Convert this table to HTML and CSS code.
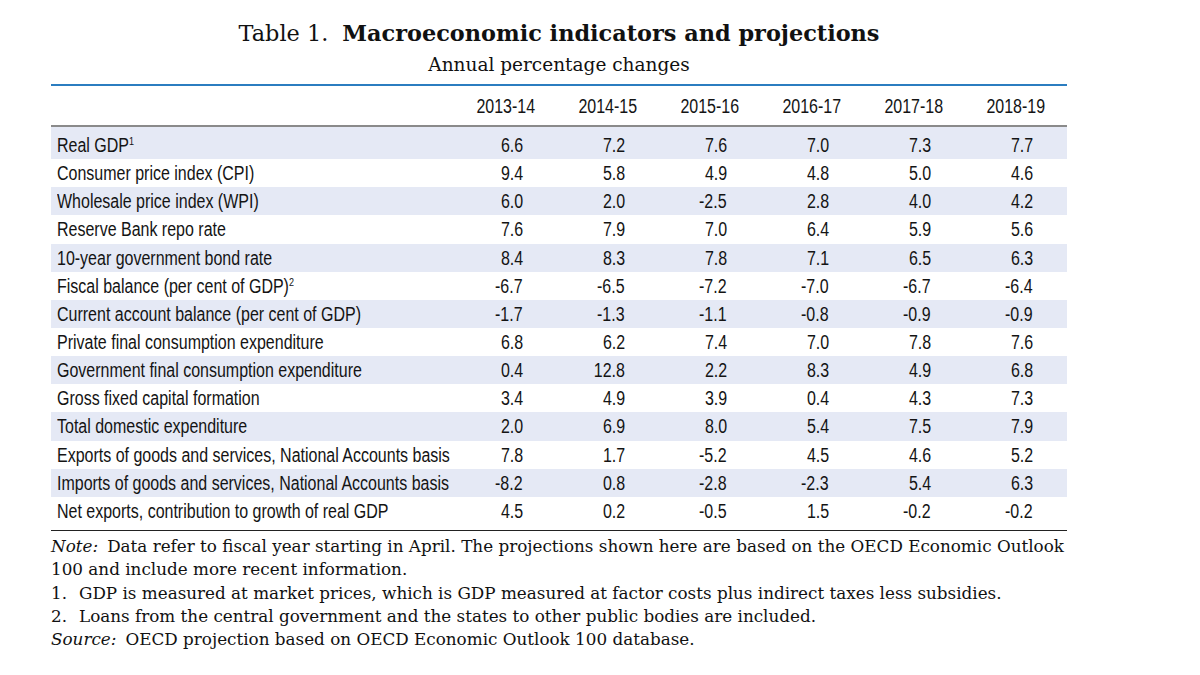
FILE: index.html
```html
<!DOCTYPE html>
<html>
<head>
<meta charset="utf-8">
<link rel="stylesheet" href="styles.css">
</head>
<body>
<div class="page">
  <h1 class="title"><span class="label">Table 1.</span><b>Macroeconomic indicators and projections</b></h1>
  <div class="subtitle">Annual percentage changes</div>
  <table class="data">
    <thead>
      <tr><th class="name"></th><th><span>2013-14</span></th><th><span>2014-15</span></th><th><span>2015-16</span></th><th><span>2016-17</span></th><th><span>2017-18</span></th><th><span>2018-19</span></th></tr>
    </thead>
    <tbody>
      <tr><td class="name"><span>Real GDP<sup>1</sup></span></td><td><span>6.6</span></td><td><span>7.2</span></td><td><span>7.6</span></td><td><span>7.0</span></td><td><span>7.3</span></td><td><span>7.7</span></td></tr>
      <tr><td class="name"><span>Consumer price index (CPI)</span></td><td><span>9.4</span></td><td><span>5.8</span></td><td><span>4.9</span></td><td><span>4.8</span></td><td><span>5.0</span></td><td><span>4.6</span></td></tr>
      <tr><td class="name"><span>Wholesale price index (WPI)</span></td><td><span>6.0</span></td><td><span>2.0</span></td><td><span>-2.5</span></td><td><span>2.8</span></td><td><span>4.0</span></td><td><span>4.2</span></td></tr>
      <tr><td class="name"><span>Reserve Bank repo rate</span></td><td><span>7.6</span></td><td><span>7.9</span></td><td><span>7.0</span></td><td><span>6.4</span></td><td><span>5.9</span></td><td><span>5.6</span></td></tr>
      <tr><td class="name"><span>10-year government bond rate</span></td><td><span>8.4</span></td><td><span>8.3</span></td><td><span>7.8</span></td><td><span>7.1</span></td><td><span>6.5</span></td><td><span>6.3</span></td></tr>
      <tr><td class="name"><span>Fiscal balance (per cent of GDP)<sup>2</sup></span></td><td><span>-6.7</span></td><td><span>-6.5</span></td><td><span>-7.2</span></td><td><span>-7.0</span></td><td><span>-6.7</span></td><td><span>-6.4</span></td></tr>
      <tr><td class="name"><span>Current account balance (per cent of GDP)</span></td><td><span>-1.7</span></td><td><span>-1.3</span></td><td><span>-1.1</span></td><td><span>-0.8</span></td><td><span>-0.9</span></td><td><span>-0.9</span></td></tr>
      <tr><td class="name"><span>Private final consumption expenditure</span></td><td><span>6.8</span></td><td><span>6.2</span></td><td><span>7.4</span></td><td><span>7.0</span></td><td><span>7.8</span></td><td><span>7.6</span></td></tr>
      <tr><td class="name"><span>Government final consumption expenditure</span></td><td><span>0.4</span></td><td><span>12.8</span></td><td><span>2.2</span></td><td><span>8.3</span></td><td><span>4.9</span></td><td><span>6.8</span></td></tr>
      <tr><td class="name"><span>Gross fixed capital formation</span></td><td><span>3.4</span></td><td><span>4.9</span></td><td><span>3.9</span></td><td><span>0.4</span></td><td><span>4.3</span></td><td><span>7.3</span></td></tr>
      <tr><td class="name"><span>Total domestic expenditure</span></td><td><span>2.0</span></td><td><span>6.9</span></td><td><span>8.0</span></td><td><span>5.4</span></td><td><span>7.5</span></td><td><span>7.9</span></td></tr>
      <tr><td class="name"><span>Exports of goods and services, National Accounts basis</span></td><td><span>7.8</span></td><td><span>1.7</span></td><td><span>-5.2</span></td><td><span>4.5</span></td><td><span>4.6</span></td><td><span>5.2</span></td></tr>
      <tr><td class="name"><span>Imports of goods and services, National Accounts basis</span></td><td><span>-8.2</span></td><td><span>0.8</span></td><td><span>-2.8</span></td><td><span>-2.3</span></td><td><span>5.4</span></td><td><span>6.3</span></td></tr>
      <tr><td class="name"><span>Net exports, contribution to growth of real GDP</span></td><td><span>4.5</span></td><td><span>0.2</span></td><td><span>-0.5</span></td><td><span>1.5</span></td><td><span>-0.2</span></td><td><span>-0.2</span></td></tr>
    </tbody>
  </table>
  <div class="notes">
    <p><i class="lead">Note:</i>Data refer to fiscal year starting in April. The projections shown here are based on the OECD Economic Outlook 100 and include more recent information.</p>
    <p><span class="num">1.</span>GDP is measured at market prices, which is GDP measured at factor costs plus indirect taxes less subsidies.</p>
    <p><span class="num">2.</span>Loans from the central government and the states to other public bodies are included.</p>
    <p><i class="lead">Source:</i>OECD projection based on OECD Economic Outlook 100 database.</p>
  </div>
</div>
</body>
</html>
```

FILE: styles.css
```css
html, body {
  margin: 0;
  padding: 0;
  background: #ffffff;
}

.page {
  width: 1016px;
  margin-left: 51px;
  padding-top: 18px;
  color: #111111;
}

.title {
  margin: 0;
  text-align: center;
  font-family: "DejaVu Serif", serif;
  font-weight: normal;
  font-size: 22.4px;
  line-height: 30px;
  color: #111;
}

.title b {
  font-weight: bold;
}

.title .label {
  margin-right: 14px;
}

.subtitle {
  text-align: center;
  font-family: "DejaVu Serif", serif;
  font-size: 18.5px;
  line-height: 22px;
  margin-top: 6px;
  margin-bottom: 8px;
}

.data {
  width: 1016px;
  border-collapse: collapse;
  border-top: 2px solid #2b7dc0;
  border-bottom: 1px solid #222;
  font-family: "Liberation Sans", Arial, sans-serif;
  font-size: 19.5px;
  color: #141414;
  table-layout: fixed;
}

.data th,
.data td {
  padding: 0;
  font-weight: normal;
  line-height: 22px;
  white-space: nowrap;
}

.data th span,
.data td span {
  display: inline-block;
  transform: scaleX(0.82);
}

.data th {
  width: 102px;
  height: 39px;
  text-align: center;
  border-bottom: 2px solid #8a8a8a;
}

.data th span {
  transform-origin: center;
}

.data th.name {
  width: 404px;
}

.data td {
  height: 28.15px;
  text-align: right;
  padding-right: 34px;
}

.data td span {
  transform-origin: right center;
}

.data td.name {
  text-align: left;
  padding-left: 6px;
  padding-right: 0;
}

.data td.name span {
  transform-origin: left center;
}

.data tbody tr:first-child td {
  padding-top: 4px;
}

.data tbody tr:last-child td {
  padding-bottom: 5px;
}

.data tbody tr:nth-child(odd) {
  background: #e5e9f5;
}

.data sup {
  font-size: 11px;
  line-height: 0;
  vertical-align: 7px;
}

.notes {
  font-family: "DejaVu Serif", serif;
  font-size: 16.8px;
  line-height: 23.3px;
  color: #111;
  padding-top: 4px;
}

.notes p {
  margin: 0;
}

.notes .lead {
  margin-right: 9px;
}

.notes .num {
  display: inline-block;
  width: 28px;
}
```
